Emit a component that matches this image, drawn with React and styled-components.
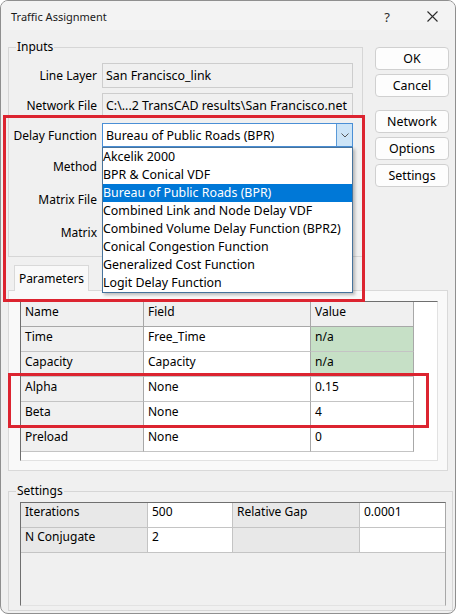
import React from "react";
import styled, { createGlobalStyle } from "styled-components";

const GlobalStyle = createGlobalStyle`
  html, body {
    margin: 0;
    padding: 0;
    background: #ffffff;
  }
  * {
    box-sizing: border-box;
  }
  body {
    font-family: "Noto Sans", "Open Sans", sans-serif;
    font-size: 12px;
    color: #000;
  }
`;

const delayFunctions = [
  "Akcelik 2000",
  "BPR & Conical VDF",
  "Bureau of Public Roads (BPR)",
  "Combined Link and Node Delay VDF",
  "Combined Volume Delay Function (BPR2)",
  "Conical Congestion Function",
  "Generalized Cost Function",
  "Logit Delay Function"
];

const params = [
  { name: "Time", field: "Free_Time", value: "n/a", fixed: true },
  { name: "Capacity", field: "Capacity", value: "n/a", fixed: true },
  { name: "Alpha", field: "None", value: "0.15" },
  { name: "Beta", field: "None", value: "4" },
  { name: "Preload", field: "None", value: "0" }
];

const App = () => {
  return (
    <>
      <GlobalStyle />
      <Window>
        <TitleBar>
          <Title>Traffic Assignment</Title>
          <TitleControls>
            <HelpGlyph>?</HelpGlyph>
            <svg width="11" height="11" viewBox="0 0 11 11">
              <path d="M0.5 0.5 L10.5 10.5 M10.5 0.5 L0.5 10.5" stroke="#2b2b2b" strokeWidth="1.1" />
            </svg>
          </TitleControls>
        </TitleBar>

        <Body>
          <TopRow>
            <GroupBox width={355}>
              <Legend>Inputs</Legend>
              <FieldStack>
                <FieldRow h={25}>
                  <FieldLabel>Line Layer</FieldLabel>
                  <ReadOnlyBox>San Francisco_link</ReadOnlyBox>
                </FieldRow>
                <FieldRow h={25}>
                  <FieldLabel>Network File</FieldLabel>
                  <ReadOnlyBox>C:\...2 TransCAD results\San Francisco.net</ReadOnlyBox>
                </FieldRow>
                <FieldRow h={24}>
                  <FieldLabel>Delay Function</FieldLabel>
                  <SelectWrap>
                    <SelectBox>
                      <SelectText>Bureau of Public Roads (BPR)</SelectText>
                      <ArrowButton>
                        <svg width="8" height="5" viewBox="0 0 8 5">
                          <path d="M0.5 0.5 L4 4 L7.5 0.5" stroke="#555" strokeWidth="1" fill="none" />
                        </svg>
                      </ArrowButton>
                    </SelectBox>
                    <DropList>
                      {delayFunctions.map(f => (
                        <DropItem key={f} selected={f === "Bureau of Public Roads (BPR)"}>
                          {f}
                        </DropItem>
                      ))}
                    </DropList>
                  </SelectWrap>
                </FieldRow>
                <FieldRow h={28}>
                  <FieldLabel>Method</FieldLabel>
                </FieldRow>
                <FieldRow h={28}>
                  <FieldLabel>Matrix File</FieldLabel>
                </FieldRow>
                <FieldRow h={28}>
                  <FieldLabel>Matrix</FieldLabel>
                </FieldRow>
              </FieldStack>
            </GroupBox>

            <ButtonColumn>
              <ButtonGroup>
                <DialogButton>OK</DialogButton>
                <DialogButton>Cancel</DialogButton>
              </ButtonGroup>
              <ButtonGroup>
                <DialogButton>Network</DialogButton>
                <DialogButton>Options</DialogButton>
                <DialogButton>Settings</DialogButton>
              </ButtonGroup>
            </ButtonColumn>
          </TopRow>

          <TabArea>
            <TabStrip>
              <Tab>Parameters</Tab>
            </TabStrip>
            <TabPanel>
              <ParamGrid>
                <HeaderCell>Name</HeaderCell>
                <HeaderCell>Field</HeaderCell>
                <HeaderCell>Value</HeaderCell>
                {params.map(p => (
                  <React.Fragment key={p.name}>
                    <NameCell>{p.name}</NameCell>
                    <DataCell>{p.field}</DataCell>
                    <DataCell fixed={p.fixed}>{p.value}</DataCell>
                  </React.Fragment>
                ))}
                <RowMark />
              </ParamGrid>
            </TabPanel>
          </TabArea>

          <GroupBox width={445} settings>
            <Legend>Settings</Legend>
            <SettingsGrid>
              <SettingLabel>Iterations</SettingLabel>
              <SettingValue>500</SettingValue>
              <SettingLabel>Relative Gap</SettingLabel>
              <SettingValue last>0.0001</SettingValue>
              <SettingLabel>N Conjugate</SettingLabel>
              <SettingValue>2</SettingValue>
              <SettingLabel />
              <SettingValue last />
            </SettingsGrid>
          </GroupBox>

          <InputsMark />
        </Body>
      </Window>
    </>
  );
};

export default App;

const Window = styled.div`
  width: 456px;
  height: 614px;
  border: 1px solid #8f8f8f;
  border-radius: 8px;
  background: #f0f0f0;
  overflow: hidden;
  display: flex;
  flex-direction: column;
`;

const TitleBar = styled.div`
  height: 29px;
  display: flex;
  align-items: center;
  justify-content: space-between;
  padding: 0 17px 0 10px;
  background: #f3f3f3;
`;

const Title = styled.div`
  font-size: 11px;
  color: #1a1a1a;
  padding-top: 1px;
`;

const TitleControls = styled.div`
  display: flex;
  align-items: center;
  gap: 37px;
  padding-top: 2px;
`;

const HelpGlyph = styled.span`
  font-size: 13px;
  color: #2b2b2b;
`;

const Body = styled.div`
  position: relative;
  flex: 1;
  padding: 17px 0 0 7px;
  display: flex;
  flex-direction: column;
`;

const TopRow = styled.div`
  display: flex;
  align-items: flex-start;
  gap: 12px;
`;

const GroupBox = styled.div`
  position: relative;
  width: ${props => props.width}px;
  border: 1px solid #d6d6d6;
  padding: ${props => (props.settings ? "10px 6px 4px 11px" : "15px 9px 10px 0")};
  margin-top: ${props => (props.settings ? "20px" : "0")};
`;

const Legend = styled.span`
  position: absolute;
  top: -9px;
  left: 7px;
  padding: 0 1px;
  line-height: 16px;
  background: #f0f0f0;
`;

const FieldStack = styled.div`
  display: flex;
  flex-direction: column;
  gap: 5px;
`;

const FieldRow = styled.div`
  display: flex;
  align-items: center;
  gap: 5px;
  height: ${props => props.h}px;
`;

const FieldLabel = styled.div`
  width: 88px;
  flex-shrink: 0;
  text-align: right;
  white-space: nowrap;
`;

const ReadOnlyBox = styled.div`
  flex: 1;
  height: 100%;
  border: 1px solid #cdcdcd;
  background: #f0f0f0;
  padding: 0 3px;
  display: flex;
  align-items: center;
  font-size: 12.4px;
  white-space: nowrap;
  overflow: hidden;
`;

const SelectWrap = styled.div`
  position: relative;
  flex: 1;
  height: 100%;
`;

const SelectBox = styled.div`
  height: 100%;
  display: flex;
  align-items: stretch;
  border: 1px solid #4a8fd6;
  background: #fff;
`;

const SelectText = styled.div`
  flex: 1;
  padding-left: 3px;
  display: flex;
  align-items: center;
  font-size: 12.4px;
`;

const ArrowButton = styled.div`
  width: 16px;
  display: flex;
  align-items: center;
  justify-content: center;
  background: #cce4f7;
  border-left: 1px solid #5a9ad8;
`;

const DropList = styled.div`
  position: absolute;
  top: 100%;
  left: 0;
  width: 100%;
  background: #fff;
  border: 1px solid #47739c;
  box-shadow: 2px 2px 3px rgba(0, 0, 0, 0.25);
  z-index: 2;
`;

const DropItem = styled.div`
  height: 18px;
  line-height: 18px;
  font-size: 12.4px;
  white-space: nowrap;
  background: ${props => (props.selected ? "#0078d7" : "transparent")};
  color: ${props => (props.selected ? "#fff" : "#000")};
`;

const ButtonColumn = styled.div`
  width: 74px;
  display: flex;
  flex-direction: column;
  gap: 13px;
`;

const ButtonGroup = styled.div`
  display: flex;
  flex-direction: column;
  gap: 4px;
`;

const DialogButton = styled.div`
  height: 23px;
  display: flex;
  align-items: center;
  justify-content: center;
  font-size: 12.4px;
  background: #fdfdfd;
  border: 1px solid #d0d0d0;
  border-radius: 4px;
`;

const TabArea = styled.div`
  width: 440px;
  margin-top: 8px;
`;

const TabStrip = styled.div`
  display: flex;
  padding-left: 6px;
`;

const Tab = styled.div`
  width: 75px;
  height: 26px;
  margin-bottom: -1px;
  display: flex;
  align-items: center;
  justify-content: center;
  background: #f9f9f9;
  border: 1px solid #d9d9d9;
  border-bottom: none;
  position: relative;
  z-index: 1;
`;

const TabPanel = styled.div`
  border: 1px solid #d9d9d9;
  background: #f9f9f9;
  padding: 10px 9px 9px 11px;
`;

const ParamGrid = styled.div`
  position: relative;
  width: 418px;
  height: 160px;
  display: grid;
  grid-template-columns: 123px 167px 103px;
  grid-auto-rows: 25px;
  align-content: start;
  background: #fff;
  border-top: 1px solid #6f6f6f;
  border-left: 1px solid #6f6f6f;
  border-right: 1px solid #e2e2e2;
  border-bottom: 1px solid #e2e2e2;
`;

const Cell = styled.div`
  padding: 2px 4px 0;
  line-height: 16px;
  border-right: 1px solid #a8a8a8;
  border-bottom: 1px solid #c4c4c4;
  white-space: nowrap;
`;

const HeaderCell = styled(Cell)`
  background: #f0f0f0;
  border-bottom-color: #a8a8a8;
`;

const NameCell = styled(Cell)`
  background: #f0f0f0;
`;

const DataCell = styled(Cell)`
  background: ${props => (props.fixed ? "#c6e0c6" : "#fff")};
`;

const RowMark = styled.div`
  position: absolute;
  left: -13px;
  top: 71px;
  width: 421px;
  height: 55px;
  border: 3px solid #dc2430;
  pointer-events: none;
`;

const InputsMark = styled.div`
  position: absolute;
  left: 2px;
  top: 85px;
  width: 362px;
  height: 187px;
  border: 3px solid #dc2430;
  pointer-events: none;
  z-index: 3;
`;

const SettingsGrid = styled.div`
  width: 426px;
  height: 104px;
  display: grid;
  grid-template-columns: 127px 85px 127px 1fr;
  grid-auto-rows: 25px;
  align-content: start;
  background: #f0f0f0;
  border-top: 1px solid #6f6f6f;
  border-left: 1px solid #6f6f6f;
  border-right: 1px solid #a8a8a8;
  border-bottom: 1px solid #e2e2e2;
`;

const SettingLabel = styled.div`
  padding: 1px 4px 0;
  line-height: 16px;
  background: #e8e8e8;
  border-right: 1px solid #c4c4c4;
  border-bottom: 1px solid #c4c4c4;
`;

const SettingValue = styled.div`
  padding: 1px 4px 0;
  line-height: 16px;
  background: #fff;
  border-right: ${props => (props.last ? "none" : "1px solid #c4c4c4")};
  border-bottom: 1px solid #c4c4c4;
`;
